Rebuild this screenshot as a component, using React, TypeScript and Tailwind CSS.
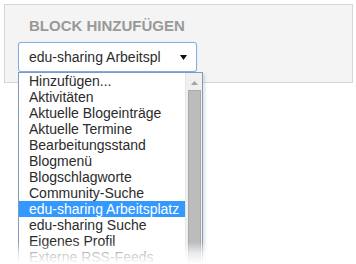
import React from 'react';

const items = [
  'Hinzufügen...',
  'Aktivitäten',
  'Aktuelle Blogeinträge',
  'Aktuelle Termine',
  'Bearbeitungsstand',
  'Blogmenü',
  'Blogschlagworte',
  'Community-Suche',
  'edu-sharing Arbeitsplatz',
  'edu-sharing Suche',
  'Eigenes Profil',
  'Externe RSS-Feeds',
];

export default function App() {
  const selected = 'edu-sharing Arbeitsplatz';

  return (
    <div
      className="relative w-[356px] h-[264px] overflow-hidden bg-white p-[4px]"
      style={{ fontFamily: '"Liberation Sans", Arial, sans-serif' }}
    >
      {/* Block panel */}
      <div className="w-[349px] h-[79px] border border-[#d6d6d6] bg-[#f4f4f4] pl-[13px] pt-[12px]">
        <h3 className="ml-[11px] text-[15px] leading-[17px] font-bold text-[#999999]">BLOCK HINZUFÜGEN</h3>

        {/* Select */}
        <div className="relative mt-[8px] w-[179px]">
          <div className="flex h-[30px] items-center justify-between rounded-[3px] border border-[#85abe6] bg-white pl-[10px] pr-[8px] shadow-[0_0_1px_#a9c6f0]">
            <span className="text-[14px] leading-[16px] text-[#2b2b2b]">edu-sharing Arbeitspl</span>
            <svg width="7" height="5" viewBox="0 0 7 5" className="mr-[1px] mt-[1px]">
              <path d="M0 0h7L3.5 5z" fill="#111" />
            </svg>
          </div>

          {/* Open list */}
          <div className="absolute left-0 top-[30px] z-10 flex w-[185px] border border-[#7f9db9] bg-white shadow-[2px_2px_3px_rgba(0,0,0,0.12)]">
            <ul className="w-[166px]">
              {items.map(item => (
                <li
                  key={item}
                  className={`h-[16px] whitespace-nowrap pl-[10px] text-[14px] leading-[16px] ${
                    item === selected ? 'bg-[#3399ff] text-white' : 'text-[#2b2b2b]'
                  }`}
                >
                  {item}
                </li>
              ))}
            </ul>

            {/* Scrollbar */}
            <div className="flex w-[17px] flex-col items-center bg-[#f0f0f0] border-l border-[#e6e6e6]">
              <svg width="7" height="4" viewBox="0 0 7 4" className="mt-[8px]">
                <path d="M0 4L3.5 0 7 4z" fill="#a3a3a3" />
              </svg>
              <div className="mt-[5px] h-[200px] w-[13px] border border-[#a9a9a9] bg-[#bcbcbc]" />
            </div>
          </div>
        </div>
      </div>

      {/* Fade to white at the bottom */}
      <div className="pointer-events-none absolute bottom-0 left-0 z-20 h-[22px] w-full bg-gradient-to-b from-white/0 via-white/70 to-white" />
    </div>
  );
}
